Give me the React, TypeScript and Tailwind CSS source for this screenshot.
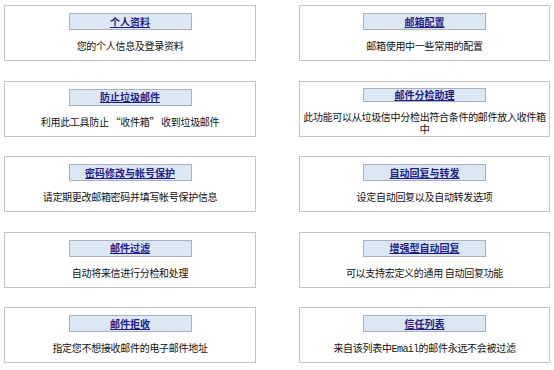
import React from 'react';

type Item = { title: string; desc: React.ReactNode; wrap?: boolean };

const items: Item[] = [
  { title: '个人资料', desc: '您的个人信息及登录资料' },
  { title: '邮箱配置', desc: '邮箱使用中一些常用的配置' },
  { title: '防止垃圾邮件', desc: '利用此工具防止 “收件箱” 收到垃圾邮件' },
  { title: '邮件分检助理', desc: '此功能可以从垃圾信中分检出符合条件的邮件放入收件箱中', wrap: true },
  { title: '密码修改与帐号保护', desc: '请定期更改邮箱密码并填写帐号保护信息' },
  { title: '自动回复与转发', desc: '设定自动回复以及自动转发选项' },
  { title: '邮件过滤', desc: '自动将来信进行分检和处理' },
  { title: '增强型自动回复', desc: '可以支持宏定义的通用 自动回复功能' },
  { title: '邮件拒收', desc: '指定您不想接收邮件的电子邮件地址' },
  {
    title: '信任列表',
    desc: (
      <>
        来自该列表中<span className="font-['Liberation_Mono',monospace] tracking-[-0.6px]">Email</span>的邮件永远不会被过滤
      </>
    ),
  },
];

function OptionBox({ item }: { item: Item }) {
  return (
    <div
      className={`h-[56px] border border-[#c3c3c3] bg-white flex flex-col items-center ${
        item.wrap ? 'pt-[6px]' : 'pt-[7px]'
      }`}
    >
      <div
        className={`w-[123px] ${
          item.wrap ? 'h-[14px]' : 'h-[17px]'
        } bg-[#dce7f4] border border-[#a8b1c0] flex items-center justify-center`}
      >
        <a className="text-[10px] font-bold text-[#1c1c8c] underline leading-none cursor-pointer">{item.title}</a>
      </div>
      <p
        className={`text-center text-[10px] tracking-[-0.3px] text-[#111] ${
          item.wrap ? 'mt-[9px] leading-[12px]' : 'mt-[9px] leading-[14px]'
        }`}
      >
        {item.desc}
      </p>
    </div>
  );
}

export default function App() {
  return (
    <div className="w-[554px] h-[370px] bg-white px-[4px] pt-[5px] font-['Noto_Sans_CJK_SC','Noto_Sans',sans-serif]">
      <div className="grid grid-cols-[252px_251px] gap-x-[43px] gap-y-[19.5px]">
        {items.map(item => (
          <OptionBox key={item.title} item={item} />
        ))}
      </div>
    </div>
  );
}
